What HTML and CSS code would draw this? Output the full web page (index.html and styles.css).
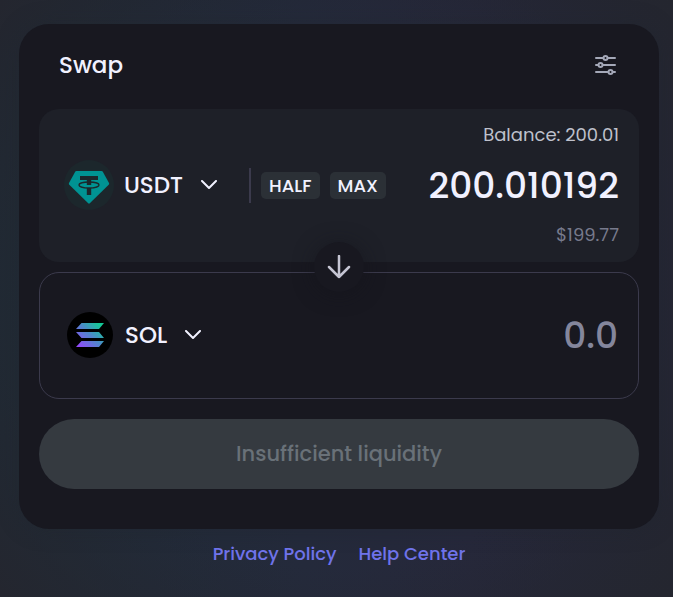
FILE: index.html
```html
<!DOCTYPE html>
<html lang="en">
<head>
    <meta charset="UTF-8">
    <meta name="viewport" content="width=device-width, initial-scale=1.0">
    <title>Swap</title>
    <link rel="stylesheet" href="styles.css">
</head>
<body>
    <main class="swap-card">
        <header class="swap-header">
            <h1>Swap</h1>
            <button class="settings-button" type="button" aria-label="Settings">
                <svg width="22" height="22" viewBox="0 0 22 22" fill="none" stroke="currentColor" stroke-width="2" stroke-linecap="round">
                    <path d="M1 4H8M13 4H20M1 11H3M8 11H20M1 18H13M18 18H20"/>
                    <circle cx="10.5" cy="4" r="2"/>
                    <circle cx="5.5" cy="11" r="2"/>
                    <circle cx="15.5" cy="18" r="2"/>
                </svg>
            </button>
        </header>

        <section class="panel panel-from">
            <p class="balance">Balance: 200.01</p>
            <div class="token-row">
                <button class="token-button" type="button">
                    <svg class="token-icon" width="50" height="50" viewBox="0 0 50 50">
                        <circle cx="25" cy="25" r="25" fill="#1c272c"/>
                        <path d="M12.5 11H37.5Q38.3 11 38.8 11.8L45 23Q45.5 24 44.7 24.8L25.8 43.3Q25 44 24.2 43.3L5.3 24.8Q4.5 24 5 23L11.2 11.8Q11.7 11 12.5 11Z" fill="#009393"/>
                        <path d="M16 16H34V20H27.2V25H22.8V20H16ZM22.8 28H27.2V35H22.8Z" fill="#1c272c"/>
                        <ellipse cx="25" cy="25" rx="10" ry="3" fill="none" stroke="#1c272c" stroke-width="1.4"/>
                    </svg>
                    <span>USDT</span>
                    <svg class="chevron" width="18" height="10" viewBox="0 0 18 10" fill="none" stroke="currentColor" stroke-width="2" stroke-linecap="round" stroke-linejoin="round">
                        <path d="M2 1L9 8L16 1"/>
                    </svg>
                </button>
                <div class="quick-amounts">
                    <button type="button">HALF</button>
                    <button type="button">MAX</button>
                </div>
                <input class="amount" type="text" value="200.010192" aria-label="Amount to swap">
            </div>
            <p class="fiat">$199.77</p>
        </section>

        <div class="switch">
            <button class="switch-button" type="button" aria-label="Switch tokens">
                <svg width="24" height="24" viewBox="0 0 24 24" fill="none" stroke="currentColor" stroke-width="2.5" stroke-linecap="round" stroke-linejoin="round">
                    <path d="M12 1V22M2 12L12 22L22 12"/>
                </svg>
            </button>
        </div>

        <section class="panel panel-to">
            <div class="token-row">
                <button class="token-button" type="button">
                    <svg class="token-icon" width="50" height="50" viewBox="0 0 50 50">
                        <defs>
                            <linearGradient id="sol" gradientUnits="userSpaceOnUse" x1="13" y1="38" x2="38" y2="13">
                                <stop offset="0" stop-color="#9945ff"/>
                                <stop offset="0.5" stop-color="#5086cc"/>
                                <stop offset="0.9" stop-color="#14c896"/>
                            </linearGradient>
                        </defs>
                        <circle cx="25" cy="25" r="23" fill="#000"/>
                        <path d="M16.5 13H39L34 19H11ZM11 22H34L39 28H16.5ZM16.5 31H39L34 37H11Z" fill="url(#sol)"/>
                    </svg>
                    <span>SOL</span>
                    <svg class="chevron" width="18" height="10" viewBox="0 0 18 10" fill="none" stroke="currentColor" stroke-width="2" stroke-linecap="round" stroke-linejoin="round">
                        <path d="M2 1L9 8L16 1"/>
                    </svg>
                </button>
                <input class="amount" type="text" placeholder="0.0" aria-label="Amount to receive">
            </div>
        </section>

        <button class="submit-button" type="button" disabled>Insufficient liquidity</button>
    </main>

    <footer>
        <a href="#privacy">Privacy Policy</a>
        <a href="#help">Help Center</a>
    </footer>
</body>
</html>
```
FILE: styles.css
```css
* {
    box-sizing: border-box;
}
body {
    margin: 0;
    padding: 24px 14px 20px 19px;
    min-height: 100vh;
    font-family: Poppins, Inter, sans-serif;
    font-weight: 500;
    color: #f1f1ff;
    background:
        radial-gradient(circle at 50% 50%, transparent 60%, #24262f 100%),
        linear-gradient(to right, #202c37 0%, #242a3b 45%, #26283b 70%, #252636 100%);
}
h1, p {
    margin: 0;
}
button, input {
    font: inherit;
    color: inherit;
    background: none;
    border: none;
    padding: 0;
}
button {
    cursor: pointer;
}
svg {
    display: block;
    flex-shrink: 0;
}
.swap-card {
    padding: 0 20px 40px;
    background-color: #181820;
    border-radius: 30px;
    box-shadow: 0 0 20px rgba(32, 38, 45, 0.5);
}
.swap-header {
    display: flex;
    align-items: center;
    justify-content: space-between;
    height: 85px;
    padding: 0 22px 4px 20px;
}
.swap-header h1 {
    font-size: 23px;
    font-weight: 500;
}
.settings-button {
    color: #a4a8b8;
}
.panel {
    border-radius: 20px;
}
.panel-from {
    padding: 14px 20px 15px 25px;
    background-color: #1e2028;
}
.panel-to {
    padding: 24px 20px 25px 25px;
    border: 1px solid #3b3a4c;
}
.balance, .fiat {
    font-size: 18px;
    line-height: 24px;
    font-weight: 400;
    text-align: right;
}
.balance {
    color: #bfc1cc;
}
.fiat {
    color: #777a8c;
}
.token-row {
    display: flex;
    align-items: center;
    height: 76px;
}
.token-button {
    display: flex;
    align-items: center;
    font-size: 23px;
}
.token-button span {
    margin: 0 17px 0 10px;
}
.quick-amounts {
    display: flex;
    align-items: center;
    gap: 10px;
    height: 35px;
    margin-left: 31px;
    padding-left: 10px;
    border-left: 2px solid #3b3a4c;
}
.quick-amounts button {
    height: 27px;
    padding: 0 8px;
    font-size: 18px;
    line-height: 27px;
    background-color: #2b3036;
    border-radius: 5px;
}
.amount {
    flex: 1;
    min-width: 0;
    font-size: 36px;
    text-align: right;
    outline: none;
}
.amount::placeholder {
    color: #84869c;
    opacity: 1;
}
.switch {
    position: relative;
    display: flex;
    align-items: center;
    justify-content: center;
    height: 10px;
}
.switch-button {
    display: flex;
    align-items: center;
    justify-content: center;
    flex-shrink: 0;
    width: 50px;
    height: 50px;
    color: #c5c5d3;
    background-color: #181820;
    border-radius: 50%;
    box-shadow: 0 2px 20px rgba(20, 20, 26, 0.6);
}
.submit-button {
    display: block;
    width: 100%;
    height: 70px;
    margin-top: 20px;
    padding-bottom: 2px;
    font-size: 21px;
    color: #697178;
    background-color: #353a40;
    border-radius: 35px;
    cursor: default;
}
footer {
    display: flex;
    justify-content: center;
    gap: 22px;
    padding-top: 13px;
    font-size: 18px;
    line-height: 24px;
}
footer a {
    color: #6f73ea;
    text-decoration: none;
}
```
